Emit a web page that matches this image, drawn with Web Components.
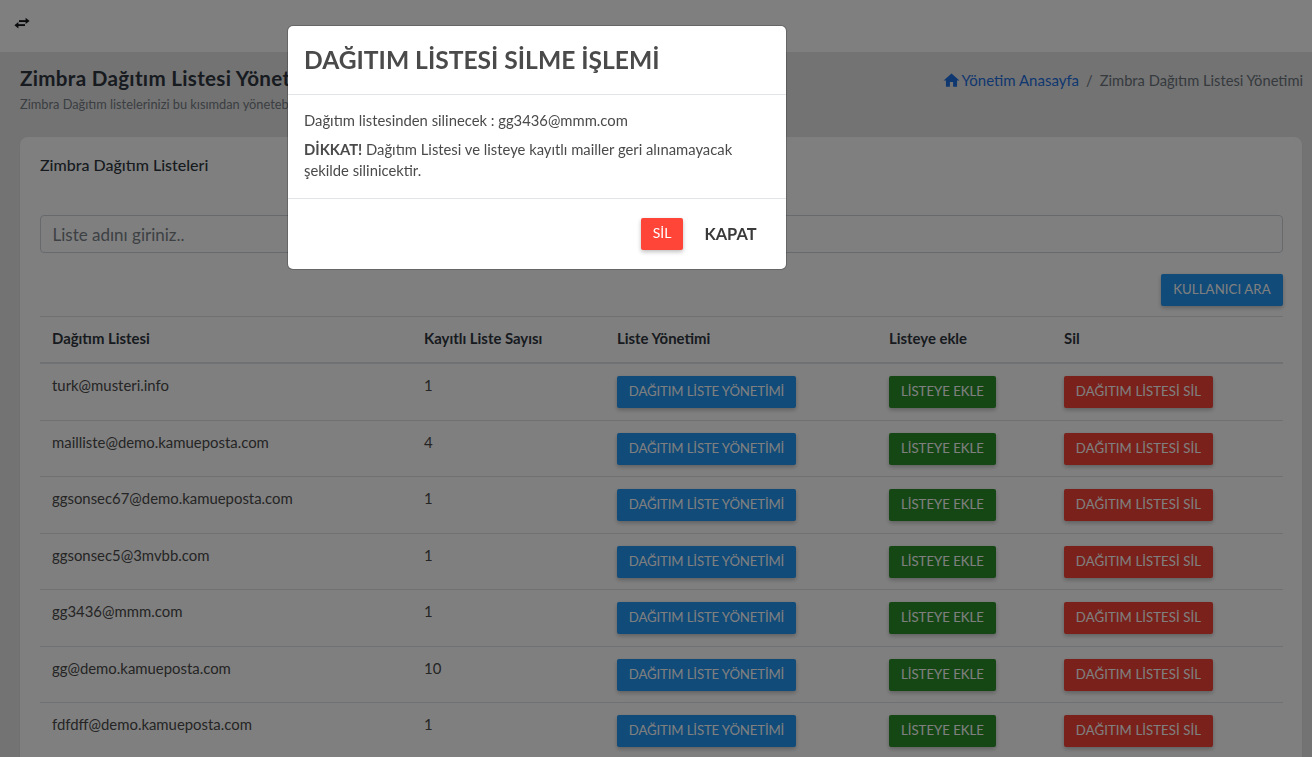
<!DOCTYPE html>
<html lang="tr"><head><meta charset="utf-8"><title>Zimbra</title>
<style>
html,body{margin:0;padding:0;height:757px;overflow:hidden;background:#e6e6e6}
body{font-family:"Lato","Open Sans",sans-serif;font-size:14px;color:#4a4a4a}
</style></head><body>
<app-page>
  <top-bar></top-bar>
  <page-head title="Zimbra Dağıtım Listesi Yönetimi" sub="Zimbra Dağıtım listelerinizi bu kısımdan yönetebilirsiniz"></page-head>
  <list-card heading="Zimbra Dağıtım Listeleri">
    <search-box placeholder="Liste adını giriniz.."></search-box>
    <div style="display:flex;justify-content:flex-end;margin-top:21px"><ui-btn kind="blue" w="122" ls=".1">KULLANICI ARA</ui-btn></div>
    <list-head></list-head>
    <list-row mail="turk@musteri.info" n="1"></list-row>
    <list-row mail="mailliste@demo.kamueposta.com" n="4"></list-row>
    <list-row mail="ggsonsec67@demo.kamueposta.com" n="1"></list-row>
    <list-row mail="ggsonsec5@3mvbb.com" n="1"></list-row>
    <list-row mail="gg3436@mmm.com" n="1"></list-row>
    <list-row mail="gg@demo.kamueposta.com" n="10"></list-row>
    <list-row mail="fdfdff@demo.kamueposta.com" n="1"></list-row>
  </list-card>
</app-page>
<confirm-modal></confirm-modal>
<script>
const def=(name,html)=>customElements.define(name,class extends HTMLElement{
  connectedCallback(){ if(this.shadowRoot) return; const r=this.attachShadow({mode:'open'}); 
    r.innerHTML=typeof html==='function'?html(this):html; }
});
const cols='grid-template-columns:372px 193px 272px 175px 231px;';
def('app-page',`<style>:host{display:block}</style><slot></slot>`);
def('top-bar',`<style>:host{display:block;height:52px;background:#fff;position:relative}
 .i{display:flex;align-items:center;height:45px;padding-left:14px}svg{display:block}</style>
 <div class="i"><svg width="16" height="12" viewBox="0 0 16 12"><g fill="none" stroke="#14181c" stroke-width="1.9"><path d="M5 4.1H13"/><path d="M3 8.1H11"/></g><path d="M11.6 .8 15.6 4.1 11.6 7z M4.4 5.1 .4 8.2 4.4 11.4z" fill="#14181c"/></svg></div>`);
def('page-head',e=>`<style>:host{display:flex;justify-content:space-between;padding:14px 9px 0 20px;height:70px;box-sizing:border-box}
 h1{margin:0;font-size:20.6px;letter-spacing:.3px;font-weight:700;color:#2f3640;line-height:24px}
 p{margin:6px 0 0;font-size:12.8px;line-height:16px;color:#767d85}
 nav{display:flex;align-items:center;gap:7px;height:28px;color:#6c757d;font-size:14.7px}
 a{color:#1e6fe0;display:inline-flex;align-items:center;gap:1px;font-size:15px}svg{margin-left:-1px}</style>
 <div><h1>${e.getAttribute('title')}</h1><p>${e.getAttribute('sub')}</p></div>
 <nav><a><svg width="19" height="19" viewBox="0 0 24 24" fill="#1e6fe0"><path d="M10 20v-6h4v6h5v-8h3L12 3 2 12h3v8z"/></svg>Yönetim Anasayfa</a><span>/</span><span>Zimbra Dağıtım Listesi Yönetimi</span></nav>`);
def('list-card',e=>`<style>:host{display:block;margin:15px 10px 0 20px;background:#fff;border-radius:8px;padding:19px 19px 20px 20px;box-shadow:0 1px 2px rgba(0,0,0,.05)}
 h2{margin:0 0 41px;width:fit-content;font-size:16px;line-height:18px;font-weight:500;color:#2f3640}</style><h2>${e.getAttribute('heading')}</h2><slot></slot>`);
def('search-box',e=>`<style>:host{display:block;height:38px;border:1px solid #ced4da;border-radius:4px;box-sizing:border-box;padding:0 12px 0 11.5px;line-height:38px;font-size:17px;color:#7a8289}</style>${e.getAttribute('placeholder')}`);
const btn={blue:'#2196f3',green:'#2b8f2b',red:'#f44336'};
def('ui-btn',e=>`<style>:host{display:inline-block;height:32px;width:${e.getAttribute('w')}px;text-align:center;border-radius:2px;background:${btn[e.getAttribute('kind')]};color:#fff;font-size:13.2px;line-height:30px;box-shadow:0 2px 4px rgba(0,0,0,.25);white-space:nowrap;box-sizing:border-box;letter-spacing:${e.getAttribute('ls')||0}px}</style><slot></slot>`);
def('list-head',`<style>:host{display:grid;${cols}height:48px;margin-top:10px;border-top:1px solid #dee2e6;border-bottom:2px solid #dee2e6;box-sizing:border-box;align-items:center;font-weight:700;color:#2f3640;font-size:14.9px;padding-bottom:3px}
 div{padding-left:12px}</style><div>Dağıtım Listesi</div><div>Kayıtlı Liste Sayısı</div><div>Liste Yönetimi</div><div>Listeye ekle</div><div>Sil</div>`);
def('list-row',e=>`<style>:host{display:grid;${cols}height:56.5px;border-bottom:1px solid #dee2e6;box-sizing:border-box;color:#4a4a4a;font-size:14.9px}
 .c{padding:11px 12px 0;line-height:20px}.b{padding:12px 0 0 12px}</style>
 <div class="c">${e.getAttribute('mail')}</div><div class="c">${e.getAttribute('n')}</div>
 <div class="b"><ui-btn kind="blue" w="179" ls="-.13">DAĞITIM LİSTE YÖNETİMİ</ui-btn></div>
 <div class="b"><ui-btn kind="green" w="107">LİSTEYE EKLE</ui-btn></div>
 <div class="b"><ui-btn kind="red" w="149" ls=".08">DAĞITIM LİSTESİ SİL</ui-btn></div>`);
def('confirm-modal',`<style>:host{position:fixed;inset:0;background:rgba(0,0,0,.5);display:block}
 .m{position:absolute;left:288px;top:26px;width:498px;height:243px;background:#fff;border-radius:5px;display:flex;flex-direction:column;color:#4a4a4a;box-shadow:0 0 0 1px rgba(0,0,0,.2)}
 header{height:69px;border-bottom:1px solid #e3e3ea;box-sizing:border-box;display:flex;align-items:center;padding:0 16px 2px;flex:none}
 h3{margin:0;font-size:24.6px;font-weight:700;color:#4a4a4a}
 .body{height:104px;border-bottom:1px solid #e3e3ea;box-sizing:border-box;padding:15px 16px 0;flex:none;font-size:14.8px;line-height:21px}
 p{margin:0 0 8px}
 footer{flex:1;display:flex;justify-content:flex-end;align-items:flex-start;padding:19px 8px 0 0}
 .del{height:32px;width:42px;background:#ff4538;color:#fff;border-radius:2px;font-size:14px;line-height:30px;text-align:center;box-shadow:0 2px 4px rgba(0,0,0,.25)}
 .close{height:32px;width:95px;text-align:center;line-height:32px;font-size:16.4px;font-weight:700;color:#3a3a3a}
 </style><div class="m"><header><h3>DAĞITIM LİSTESİ SİLME İŞLEMİ</h3></header>
 <div class="body"><p>Dağıtım listesinden silinecek : gg3436@mmm.com</p><p><b>DİKKAT!</b> Dağıtım Listesi ve listeye kayıtlı mailler geri alınamayacak<br>şekilde silinicektir.</p></div>
 <footer><div class="del">SİL</div><div class="close">KAPAT</div></footer></div>`);
</script></body></html>
